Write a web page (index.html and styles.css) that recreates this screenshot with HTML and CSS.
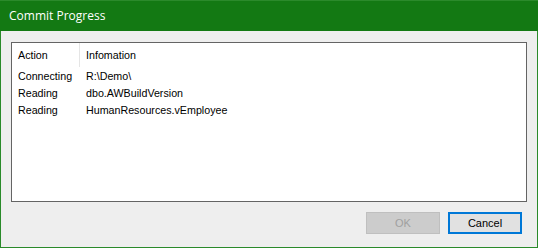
FILE: index.html
```html
<!DOCTYPE html>
<html lang="en">
  <head>
    <meta charset="UTF-8" />
    <title>Commit Progress</title>
    <link rel="stylesheet" href="styles.css">
  </head>
  <body>
    <div class="dialog">
      <div class="dialog-title">Commit Progress</div>
      <div class="dialog-body">
        <div class="list-view">
          <div class="list-header">
            <div class="col col-action">Action</div>
            <div class="col col-info">Infomation</div>
          </div>
          <div class="list-row">
            <div class="col col-action">Connecting</div>
            <div class="col col-info">R:\Demo\</div>
          </div>
          <div class="list-row">
            <div class="col col-action">Reading</div>
            <div class="col col-info">dbo.AWBuildVersion</div>
          </div>
          <div class="list-row">
            <div class="col col-action">Reading</div>
            <div class="col col-info">HumanResources.vEmployee</div>
          </div>
        </div>
        <div class="buttons-container">
          <button class="btn btn-ok" disabled>OK</button>
          <button class="btn btn-cancel">Cancel</button>
        </div>
      </div>
    </div>
  </body>
</html>
```

FILE: styles.css
```css
body {
  margin: 0;
  background: #f0f0f0;
  font-family: "Liberation Sans", Arial, sans-serif;
}

.dialog {
  width: 538px;
  height: 248px;
  box-sizing: border-box;
  border: 1px solid #2a8a2a;
  border-top: none;
  background: #eeeeee;
  display: flex;
  flex-direction: column;
}

.dialog-title {
  height: 30px;
  border-top: 1px solid #2b8a2b;
  margin: 0 -1px;
  padding-left: 9px;
  background: #137913;
  color: #ffffff;
  font-family: "Open Sans", "Noto Sans", sans-serif;
  font-size: 12px;
  line-height: 29px;
}

.dialog-body {
  flex: 1;
  padding: 11px 10px 0 10px;
}

.list-view {
  height: 160px;
  box-sizing: border-box;
  border: 1px solid #646464;
  background: #ffffff;
  font-size: 10.7px;
  color: #000000;
}

.list-header,
.list-row {
  display: flex;
}

.list-header {
  height: 24px;
  line-height: 24px;
}

.list-header .col-action {
  border-right: 1px solid #e5e5e5;
}

.list-header + .list-row {
  margin-top: 1px;
}

.list-row {
  height: 17px;
  line-height: 17px;
}

.col {
  padding-left: 6px;
  white-space: nowrap;
}

.col-action {
  width: 61px;
}

.list-row .col-action {
  width: 62px;
}

.buttons-container {
  display: flex;
  justify-content: flex-end;
  gap: 8px;
  margin-top: 10px;
  padding-right: 5px;
}

.btn {
  width: 74px;
  height: 22px;
  box-sizing: border-box;
  font-family: "Liberation Sans", Arial, sans-serif;
  font-size: 11px;
  padding: 0;
}

.btn-ok {
  background: #cccccc;
  border: 1px solid #bfbfbf;
  color: #a0a0a0;
}

.btn-cancel {
  background: #e1e1e1;
  border: 2px solid #0078d7;
  color: #000000;
}
```
